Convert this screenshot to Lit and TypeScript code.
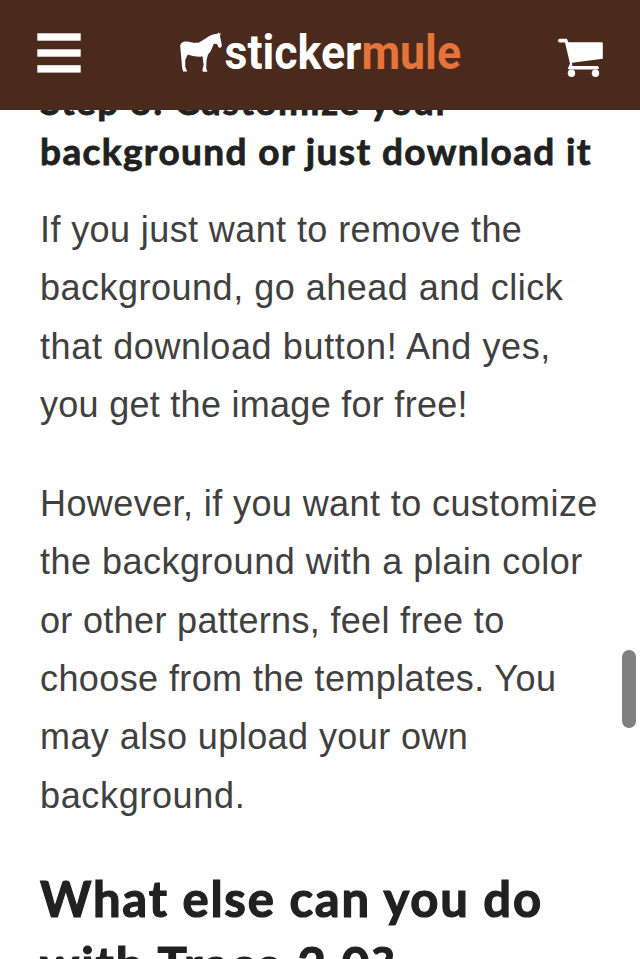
import { LitElement, html, css } from "lit";
import { customElement } from "lit/decorators.js";

type Line = [text: string, tracking: number];

const STEP: Line[] = [
  ["Step 3: Customize your", 1.45],
  ["background or just download it", 1.38],
];
const DOWNLOAD: Line[] = [
  ["If you just want to remove the", 0.4],
  ["background, go ahead and click", 0.5],
  ["that download button! And yes,", 0.62],
  ["you get the image for free!", 0.28],
];
const CUSTOMIZE: Line[] = [
  ["However, if you want to customize", 0.41],
  ["the background with a plain color", 0.5],
  ["or other patterns, feel free to", 0.33],
  ["choose from the templates. You", 0.4],
  ["may also upload your own", 0.42],
  ["background.", 0.65],
];
const MORE: Line[] = [
  ["What else can you do", 1.8],
  ["with Trace 2.0?", 1.9],
];

const lines = (rows: Line[]) =>
  rows.map(([text, tracking]) => html`<span class="line" style="letter-spacing:${tracking}px">${text}</span>`);

@customElement("site-header")
class SiteHeader extends LitElement {
  static styles = css`
    :host { display: flex; flex: none; height: 110px; background: #4a2a1c; position: relative; z-index: 1; }
    .bar { width: 100%; height: 110px; display: block; }
    .word { font-family: Roboto, "Open Sans", sans-serif; font-weight: 700; font-size: 49px; }
    .light { fill: #fff; }
    .accent { fill: #e5733a; }
  `;
  render() {
    return html`<svg class="bar" viewBox="0 0 640 110">
      <g class="light">
        <rect x="37.3" y="33.3" width="43.4" height="7.4" />
        <rect x="37.3" y="49.3" width="43.4" height="7.4" />
        <rect x="37.3" y="65.2" width="43.4" height="7.4" />
        <path d="M180.2 46 Q180.5 42 185 41.5 C190 41 194 43.8 199 42.4 C204 40.5 207 36.5 213 34.6 L217.4 33.8 L218.3 32.3 L219 33.8 L220.8 33 L220 36 L221.9 45.5 Q221.3 48.5 219 47.7 L216.8 44 L213.8 43.8 C212 48 211.5 51 208 54.5 L206.6 60 L206.2 68 L207.4 71.8 L202.8 71.8 L202.5 69.5 L203.6 65 L202.6 56.6 C197 57.3 191 55.5 187.8 54.4 L185.2 60 L185.3 67 L187.2 71.4 L183 71.6 L182 67 L181.4 59 L181 55Z" />
      </g>
      <text class="word light" x="224.5" y="69" textLength="236.5" lengthAdjust="spacingAndGlyphs">sticker<tspan class="accent">mule</tspan></text>
      <g class="light">
        <path d="M559.5 38.7 H566.8 L568.5 42.2 H601.5 Q602.8 42.2 602.8 43.5 V58.7 L572 62.8 L572.3 66 H597.5 Q600.5 67.8 597.5 69.6 H569.3 L567.8 68.4 L570 63.5 L565 42.4 H559.5 Q556 40.5 559.5 38.7Z" />
        <circle cx="571.5" cy="73.2" r="3.7" />
        <circle cx="595.5" cy="73.2" r="3.7" />
      </g>
    </svg>`;
  }
}

@customElement("app-root")
class AppRoot extends LitElement {
  static styles = css`
    :host { display: flex; flex-direction: column; height: 959px; overflow: hidden; position: relative; background: #fff; }
    .article { padding: 0 40px; margin-top: -34px; }
    h2, h3, p { margin: 0; white-space: nowrap; }
    .line { display: block; }
    h2, h3 { color: #212121; font-family: Lato, sans-serif; font-weight: 700; -webkit-text-stroke: 0.8px #212121; }
    h3 { font-size: 37px; line-height: 50px; }
    h2 { font-size: 49px; line-height: 66px; margin-top: 40px; -webkit-text-stroke-width: 1.2px; }
    p { color: #404040; font-family: "Liberation Sans", Arial, sans-serif; font-size: 36px; line-height: 58.3px; margin-top: 25px; }
    p + p { margin-top: 41px; }
    .thumb { position: absolute; left: 622px; top: 650px; width: 14px; height: 78px; border-radius: 7px; background: #808080; }
  `;
  render() {
    return html`
      <site-header></site-header>
      <main class="article">
        <h3>${lines(STEP)}</h3>
        <p>${lines(DOWNLOAD)}</p>
        <p>${lines(CUSTOMIZE)}</p>
        <h2>${lines(MORE)}</h2>
      </main>
      <div class="thumb"></div>
    `;
  }
}
